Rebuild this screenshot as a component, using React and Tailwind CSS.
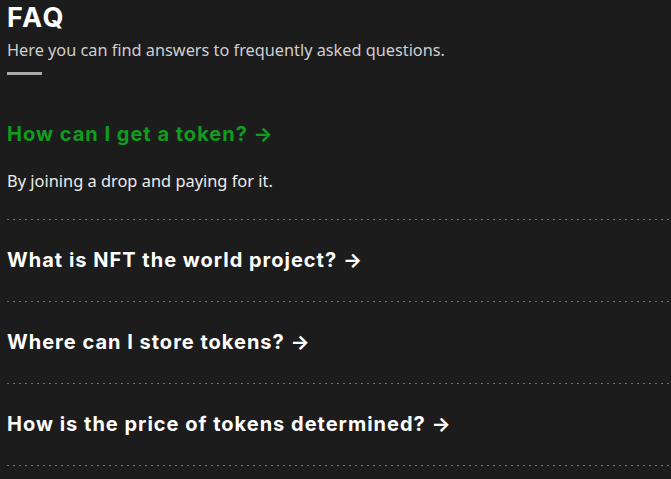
import React from 'react';

const faqs = [
  { q: 'How can I get a token?', a: 'By joining a drop and paying for it.', open: true },
  { q: 'What is NFT the world project?' },
  { q: 'Where can I store tokens?' },
  { q: 'How is the price of tokens determined?' },
];

const head = { fontFamily: "Inter, 'Noto Sans', sans-serif" };

export default function App() {
  return (
    <div className="min-h-screen bg-[#1c1c1c] text-white overflow-hidden" style={{ fontFamily: "'Noto Sans', 'Open Sans', sans-serif" }}>
      <div className="pl-[7px]">
        <h1 className="text-[27px] leading-[34px] font-bold pt-[1px] tracking-[1.5px]" style={head}>FAQ</h1>
        <p className="text-[16.3px] leading-6 text-[#cfcfcf] mt-[3px]">Here you can find answers to frequently asked questions.</p>
        <div className="w-[35px] h-[3px] bg-[#a9a9a9] mt-[10px]" />
      </div>

      <div className="mt-[19px]">
        {faqs.map((f, i) => (
          <div key={i} className="ml-[7px]">
            <h3
              className={`text-[20px] leading-6 font-bold tracking-[1px] pt-[28px] ${f.open ? 'pb-[23px] text-[#119c1f]' : 'pb-[29px] text-white'}`}
              style={head}
            >
              {f.q} <span>→</span>
            </h3>
            {f.open && <p className="text-[16.4px] leading-6 text-[#ededed] pb-[26px]">{f.a}</p>}
            {/* dotted divider */}
            <div className="h-px bg-[linear-gradient(to_right,#707070_2px,transparent_2px)] bg-[length:6px_1px] bg-repeat-x" />
          </div>
        ))}
      </div>
    </div>
  );
}
